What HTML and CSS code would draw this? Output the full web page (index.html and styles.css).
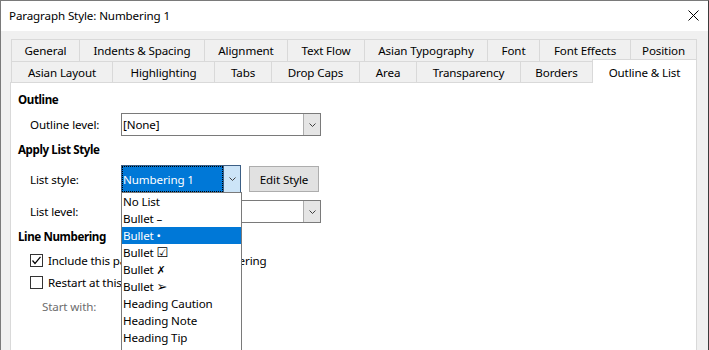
FILE: index.html
```html
<!DOCTYPE html>
<html>
<head>
<meta charset="utf-8">
<title>Paragraph Style: Numbering 1</title>
<link rel="stylesheet" href="styles.css">
</head>
<body>
<div class="window">
  <div class="titlebar">
    <span class="title">Paragraph Style: Numbering 1</span>
    <svg class="close" width="11" height="11" viewBox="0 0 11 11"><path d="M0.5 0.5 L10.5 10.5 M10.5 0.5 L0.5 10.5" stroke="#000" stroke-width="1" fill="none"/></svg>
  </div>
  <div class="client">
    <div class="tabrow row1">
      <div class="tab">General</div>
      <div class="tab">Indents &amp; Spacing</div>
      <div class="tab">Alignment</div>
      <div class="tab">Text Flow</div>
      <div class="tab">Asian Typography</div>
      <div class="tab">Font</div>
      <div class="tab">Font Effects</div>
      <div class="tab">Position</div>
    </div>
    <div class="tabrow row2">
      <div class="tab">Asian Layout</div>
      <div class="tab">Highlighting</div>
      <div class="tab">Tabs</div>
      <div class="tab">Drop Caps</div>
      <div class="tab">Area</div>
      <div class="tab">Transparency</div>
      <div class="tab">Borders</div>
      <div class="tab active">Outline &amp; List</div>
    </div>
    <div class="panel">
      <div class="heading h-outline">Outline</div>
      <div class="row r-outline">
        <span class="label">Outline level:</span>
        <div class="select">
          <span class="value">[None]</span>
          <span class="btn"><svg width="7" height="4" viewBox="0 0 7 4"><polyline points="0.5,0.5 3.5,3.5 6.5,0.5" fill="none" stroke="#404040" stroke-width="1"/></svg></span>
        </div>
      </div>
      <div class="heading h-apply">Apply List Style</div>
      <div class="row r-liststyle">
        <span class="label">List style:</span>
        <div class="combo">
          <span class="value"><span class="focusrect">Numbering 1</span></span>
          <span class="btn"><svg width="7" height="4" viewBox="0 0 7 4"><polyline points="0.5,0.5 3.5,3.5 6.5,0.5" fill="none" stroke="#404040" stroke-width="1"/></svg></span>
          <ul class="popup">
            <li>No List</li>
            <li>Bullet –</li>
            <li class="hl">Bullet •</li>
            <li>Bullet <span class="sym">☑</span></li>
            <li>Bullet <span class="sym sym-x">✗</span></li>
            <li>Bullet <span class="sym">➢</span></li>
            <li>Heading Caution</li>
            <li>Heading Note</li>
            <li>Heading Tip</li>
          </ul>
        </div>
        <div class="pbtn">Edit Style</div>
      </div>
      <div class="row r-listlevel">
        <span class="label">List level:</span>
        <div class="select">
          <span class="value"></span>
          <span class="btn"><svg width="7" height="4" viewBox="0 0 7 4"><polyline points="0.5,0.5 3.5,3.5 6.5,0.5" fill="none" stroke="#404040" stroke-width="1"/></svg></span>
        </div>
      </div>
      <div class="heading h-line">Line Numbering</div>
      <div class="row check r-check1">
        <span class="box"><svg width="11" height="11" viewBox="0 0 11 11"><polyline points="1.5,5.5 4,8.5 9.5,1.8" fill="none" stroke="#000" stroke-width="1.2"/></svg></span>
        <span>Include this paragraph in line numbering</span>
      </div>
      <div class="row check">
        <span class="box"></span>
        <span>Restart at this paragraph</span>
      </div>
      <div class="row startwith">
        <span class="disabled">Start with:</span>
      </div>
    </div>
  </div>
</div>
</body>
</html>
```
FILE: styles.css
```css
* { box-sizing: border-box; }
html, body { margin: 0; padding: 0; }
body {
  background: #3b3b3b;
  font-family: "Noto Sans", "DejaVu Sans", sans-serif;
  font-size: 11.6px;
  letter-spacing: -0.12px;
  color: #000;
  width: 709px;
  height: 350px;
  overflow: hidden;
}
.window {
  width: 709px;
  height: 360px;
  border: 1px solid #7a7a7a;
  border-right-color: #3b3b3b;
  border-bottom: none;
  background: #f0f0f0;
}
.titlebar {
  height: 30px;
  background: #fff;
  display: flex;
  align-items: center;
  justify-content: space-between;
  padding: 0 9px 1px 8px;
}
.title { line-height: 16px; }
.close { display: block; }
.client { padding: 8px 0 0 9px; }
.tabrow {
  display: grid;
  width: 686px;
  margin-left: 1px;
}
.row1 { grid-template-columns: 68px 125px 83px 77px 123px 52px 91px 67px; height: 22px; }
.row2 { grid-template-columns: 101px 102px 57px 88px 57px 104px 72px 105px; height: 21px; }
.tab {
  border: 1px solid #d9d9d9;
  border-bottom: none;
  border-right: none;
  background: #f0f0f0;
  display: flex;
  align-items: center;
  justify-content: center;
  white-space: nowrap;
}
.tab:last-child { border-right: 1px solid #d9d9d9; }
.tab.active {
  background: #fff;
  margin-top: -2px;
  margin-bottom: -1px;
  padding-top: 1px;
  z-index: 1;
}
.panel {
  width: 687px;
  height: 280px;
  border: 1px solid #d9d9d9;
  border-bottom: none;
  background: #fff;
  padding: 0 7px;
}
.heading {
  font-weight: bold;
  line-height: 16px;
  letter-spacing: -0.4px;
}
.h-outline { margin-top: 9px; }
.h-apply { margin-top: 6px; }
.h-line { margin-top: 6px; }
.row {
  display: flex;
  align-items: center;
  margin-left: 12px;
}
.label { width: 91px; flex: none; }
.r-outline { margin-top: 5px; height: 23px; }
.r-liststyle { margin-top: 7px; height: 28px; }
.r-listlevel { margin-top: 7px; height: 23px; }
.select {
  width: 200px;
  height: 23px;
  border: 1px solid #7a7a7a;
  display: flex;
  background: #fff;
}
.select .value { flex: 1; padding-left: 1px; line-height: 21px; }
.btn {
  width: 17px;
  flex: none;
  display: flex;
  align-items: center;
  justify-content: center;
  background: #e5e5e5;
  border-left: 1px solid #adadad;
}
.btn svg { display: block; }
.combo {
  position: relative;
  width: 120px;
  height: 28px;
  border: 1px solid #3c5f85;
  display: flex;
  background: #fff;
}
.combo .value {
  flex: 1;
  background: #0078d7;
  color: #fff;
  display: flex;
}
.focusrect {
  flex: 1;
  border: 1px dotted #000;
  display: flex;
  align-items: center;
  padding-left: 0;
}
.combo .btn {
  background: #cce4f7;
  border-left: 1px solid #3c5f85;
}
.popup {
  position: absolute;
  left: -1px;
  top: 100%;
  width: 121px;
  height: 160px;
  margin: 0;
  padding: 0;
  list-style: none;
  background: #fff;
  border: 1px solid #7a7a7a;
  z-index: 5;
}
.popup li {
  height: 17px;
  line-height: 17px;
  padding-left: 1px;
  white-space: nowrap;
}
.popup li.hl { background: #0078d7; color: #fff; }
.sym { font-family: "DejaVu Sans", sans-serif; font-size: 13px; line-height: 1; }
.sym-x { font-style: italic; font-size: 11px; }
.pbtn {
  margin-left: 8px;
  width: 70px;
  height: 26px;
  background: #e1e1e1;
  border: 1px solid #adadad;
  display: flex;
  align-items: center;
  justify-content: center;
}
.check { height: 22px; white-space: nowrap; }
.r-check1 { margin-top: 4px; }
.box {
  width: 13px;
  height: 13px;
  flex: none;
  border: 1px solid #333;
  background: #fff;
  margin-right: 5px;
}
.box svg { display: block; }
.startwith { height: 26px; margin-left: 24px; }
.disabled { color: #6d6d6d; }
```
